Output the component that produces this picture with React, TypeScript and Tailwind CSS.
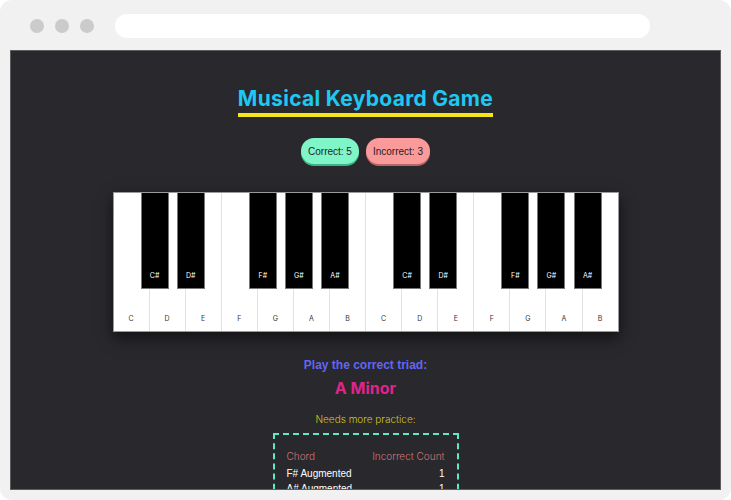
import React from "react";

const whiteKeys = ["C", "D", "E", "F", "G", "A", "B", "C", "D", "E", "F", "G", "A", "B"];
const sharps: Record<string, string> = { C: "C#", D: "D#", F: "F#", G: "G#", A: "A#" };

const practice = [
  { chord: "F# Augmented", count: 1 },
  { chord: "A# Augmented", count: 1 },
];

function Keyboard() {
  return (
    <div className="flex w-[506px] h-[140px] border border-[#9a9a9a] bg-white shadow-[0_6px_14px_rgba(0,0,0,0.55)]">
      {whiteKeys.map((note, i) => (
        <div
          key={i}
          className={`relative flex-1 flex items-end justify-center pb-[8px] ${i > 0 ? "border-l border-[#e2e2e2]" : ""}`}
        >
          <span className="text-[7px] leading-[8px] text-[#333] font-['Inter',sans-serif]">{note}</span>
          {sharps[note] && (
            <div className="absolute top-0 left-[calc(100%-8px)] z-10 w-[28px] h-[96px] bg-black border border-[#777] border-t-0 flex items-end justify-center pb-[8px]">
              <span className="text-[7px] leading-[8px] text-white font-['Inter',sans-serif]">{sharps[note]}</span>
            </div>
          )}
        </div>
      ))}
    </div>
  );
}

export default function App() {
  return (
    <div className="w-[731px] h-[500px] bg-white">
      <div className="h-full rounded-[12px] bg-[#f1f1f1] flex flex-col px-[10px] pb-[10px]">
        <div className="h-[50px] flex items-center pl-[20px] pt-[2px]">
          <div className="flex gap-[11px]">
            <span className="w-[14px] h-[14px] rounded-full bg-[#cbcbcb]" />
            <span className="w-[14px] h-[14px] rounded-full bg-[#cbcbcb]" />
            <span className="w-[14px] h-[14px] rounded-full bg-[#cbcbcb]" />
          </div>
          <div className="ml-[21px] w-[535px] h-[24px] rounded-full bg-white" />
        </div>

        <div className="flex-1 overflow-hidden bg-[#28282d] border border-[#5c5c5c] flex flex-col items-center pt-[34px] font-['Liberation_Sans',Arial,sans-serif]">
          <h1 className="inline-block text-[21px] leading-[28px] font-bold text-[#1ec8f3] border-b-4 border-[#f7e51c] font-['Inter',sans-serif] tracking-[0.3px]">
            Musical Keyboard Game
          </h1>

          <div className="flex gap-[7px] mt-[21px]">
            <span className="h-[26px] px-[7px] flex items-center rounded-full bg-[#80f5c8] text-[10px] text-[#1e1e1e] shadow-[0_2px_0_#38b786]">
              Correct: 5
            </span>
            <span className="h-[26px] px-[7px] flex items-center rounded-full bg-[#fb9a9a] text-[10px] text-[#1e1e1e] shadow-[0_2px_0_#b76767]">
              Incorrect: 3
            </span>
          </div>

          <div className="mt-[28px]">
            <Keyboard />
          </div>

          <p className="mt-[25px] text-[12px] leading-[16px] font-bold text-[#6366f1]">Play the correct triad:</p>
          <p className="mt-[5px] text-[16px] leading-[20px] font-bold text-[#e0248a] font-['Inter',sans-serif]">A Minor</p>
          <p className="mt-[14px] text-[10px] leading-[14px] font-light text-[#d2c821] font-['Inter',sans-serif]">Needs more practice:</p>

          <div className="mt-[7px] w-[186px] border-2 border-dashed border-[#5fe9c2] pt-[14px] px-[12px] pb-[12px]">
            <div className="flex justify-between text-[10px] leading-[14px] font-light text-[#d27676] font-['Inter',sans-serif]">
              <span>Chord</span>
              <span>Incorrect Count</span>
            </div>
            {practice.map((row, i) => (
              <div
                key={row.chord}
                className={`flex justify-between text-[10px] leading-[15px] text-white ${i === 0 ? "mt-[3px]" : ""}`}
              >
                <span>{row.chord}</span>
                <span>{row.count}</span>
              </div>
            ))}
          </div>
        </div>
      </div>
    </div>
  );
}
